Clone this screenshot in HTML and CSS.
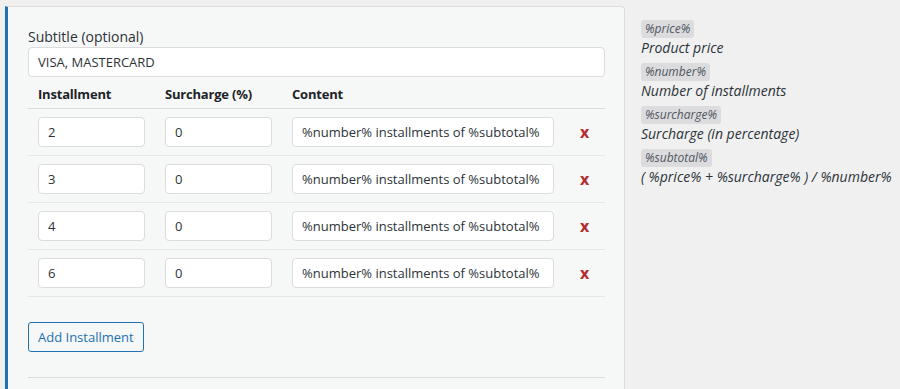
FILE: index.html
```html
<!DOCTYPE html>
<html lang="en">
<head>
    <meta charset="UTF-8">
    <meta name="viewport" content="width=device-width, initial-scale=1.0">
    <title>Installments</title>
    <link rel="stylesheet" href="styles.css">
</head>
<body>
    <div class="page">
        <div class="panel">
            <label class="field-label" for="subtitle">Subtitle (optional)</label>
            <input type="text" id="subtitle" class="text-input wide" value="VISA, MASTERCARD">

            <div class="installments">
                <div class="row head">
                    <div class="cell">Installment</div>
                    <div class="cell">Surcharge (%)</div>
                    <div class="cell">Content</div>
                    <div class="cell"></div>
                </div>
                <div class="row">
                    <div class="cell"><input type="text" class="text-input" value="2"></div>
                    <div class="cell"><input type="text" class="text-input" value="0"></div>
                    <div class="cell"><input type="text" class="text-input" value="%number% installments of %subtotal%"></div>
                    <div class="cell"><a href="#" class="remove">x</a></div>
                </div>
                <div class="row">
                    <div class="cell"><input type="text" class="text-input" value="3"></div>
                    <div class="cell"><input type="text" class="text-input" value="0"></div>
                    <div class="cell"><input type="text" class="text-input" value="%number% installments of %subtotal%"></div>
                    <div class="cell"><a href="#" class="remove">x</a></div>
                </div>
                <div class="row">
                    <div class="cell"><input type="text" class="text-input" value="4"></div>
                    <div class="cell"><input type="text" class="text-input" value="0"></div>
                    <div class="cell"><input type="text" class="text-input" value="%number% installments of %subtotal%"></div>
                    <div class="cell"><a href="#" class="remove">x</a></div>
                </div>
                <div class="row">
                    <div class="cell"><input type="text" class="text-input" value="6"></div>
                    <div class="cell"><input type="text" class="text-input" value="0"></div>
                    <div class="cell"><input type="text" class="text-input" value="%number% installments of %subtotal%"></div>
                    <div class="cell"><a href="#" class="remove">x</a></div>
                </div>
            </div>

            <button type="button" class="add-btn">Add Installment</button>
            <div class="divider"></div>
        </div>

        <div class="legend">
            <div class="legend-item">
                <code>%price%</code>
                <em>Product price</em>
            </div>
            <div class="legend-item">
                <code>%number%</code>
                <em>Number of installments</em>
            </div>
            <div class="legend-item">
                <code>%surcharge%</code>
                <em>Surcharge (in percentage)</em>
            </div>
            <div class="legend-item">
                <code>%subtotal%</code>
                <em>( %price% + %surcharge% ) / %number%</em>
            </div>
        </div>
    </div>
</body>
</html>
```

FILE: styles.css
```css
/* Base */
:root {
    --bg-page: #f0f0f1;
    --bg-panel: #f6f7f7;
    --border: #dcdcde;
    --border-light: #e6e7e8;
    --blue: #2271b1;
    --red: #b32d2e;
    --text: #2c3338;
    --text-strong: #1d2327;
}

* {
    margin: 0;
    padding: 0;
    box-sizing: border-box;
}

body {
    font-family: 'Open Sans', 'Noto Sans', sans-serif;
    font-size: 13px;
    color: var(--text);
    background: var(--bg-page);
    overflow: hidden;
}

.page {
    display: flex;
    align-items: flex-start;
    gap: 16px;
    padding: 6px 0 0 5px;
}

/* Panel */
.panel {
    width: 620px;
    height: 384px;
    background: var(--bg-panel);
    border: 1px solid var(--border);
    border-bottom: none;
    border-left: 3px solid var(--blue);
    border-radius: 0 4px 0 0;
    padding: 20px 19px 0 20px;
}

.field-label {
    display: block;
    font-size: 14px;
    line-height: 20px;
    color: var(--text);
}

.text-input {
    display: block;
    width: 100%;
    height: 30px;
    padding: 0 9px;
    border: 1px solid var(--border);
    border-radius: 4px;
    background: #fff;
    font-family: inherit;
    font-size: 13px;
    color: var(--text);
    outline: none;
}

/* Installments table */
.row {
    display: grid;
    grid-template-columns: 127px 127px 282px 1fr;
    border-bottom: 1px solid var(--border-light);
}

.row .cell {
    padding: 8px 10px;
    display: flex;
    align-items: center;
}

.row.head {
    border-bottom-color: var(--border);
}

.row.head .cell {
    height: 31px;
    padding-top: 2px;
    padding-bottom: 0;
    font-weight: 700;
    letter-spacing: -0.2px;
    color: var(--text-strong);
}

.remove {
    display: block;
    width: 100%;
    text-align: center;
    color: var(--red);
    font-size: 16px;
    font-weight: 700;
    text-decoration: none;
}

.add-btn {
    display: block;
    margin-top: 25px;
    height: 30px;
    padding: 0 9px;
    background: var(--bg-panel);
    border: 1px solid var(--blue);
    border-radius: 3px;
    color: var(--blue);
    font-family: inherit;
    font-size: 13px;
    cursor: pointer;
}

.divider {
    margin-top: 25px;
    border-top: 1px solid var(--border);
}

/* Legend */
.legend {
    display: flex;
    flex-direction: column;
    gap: 4px;
    padding-top: 13px;
}

.legend-item code {
    display: inline-block;
    height: 18px;
    line-height: 18px;
    padding: 0 4px;
    background: #dcdcde;
    border-radius: 3px;
    font-family: inherit;
    font-style: italic;
    font-size: 12px;
    color: #50575e;
}

.legend-item em {
    display: block;
    font-size: 14px;
    line-height: 20px;
    color: var(--text);
}
```
